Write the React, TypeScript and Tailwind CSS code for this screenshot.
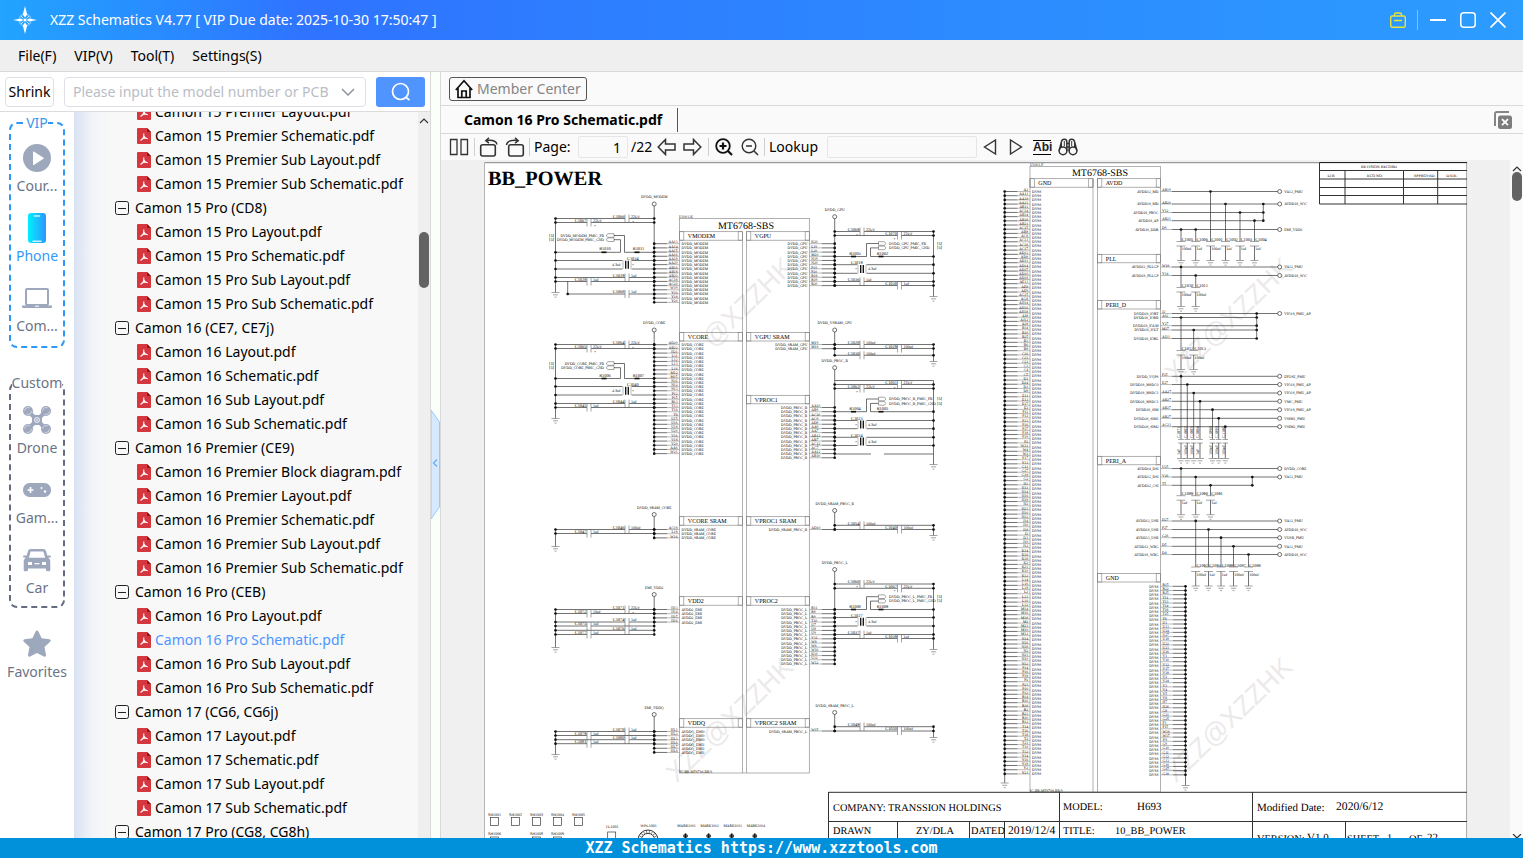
import { Fragment, type ReactNode } from "react";

/* ------------------------------------------------------------------ */
/* Schematic drawing. Sheet coordinates are scaled by K into the       */
/* viewBox, so that small print can use whole-number font sizes.       */
/* ------------------------------------------------------------------ */
const K = 3;
const WIRE = "#2b2b2b";
const PITCH = 4.19;

type LineProps = { x1: number; y1: number; x2: number; y2: number; c?: string; w?: number };
function L({ x1, y1, x2, y2, c = WIRE, w = 2 }: LineProps) {
  return <line x1={x1 * K} y1={y1 * K} x2={x2 * K} y2={y2 * K} stroke={c} strokeWidth={w} />;
}

type TextProps = {
  x: number;
  y: number;
  children: ReactNode;
  size?: number;
  anchor?: "start" | "middle" | "end";
  bold?: boolean;
  c?: string;
  turn?: number;
};
function T({ x, y, children, size = 11, anchor = "start", bold, c = "#000", turn }: TextProps) {
  return (
    <text
      x={x * K}
      y={y * K}
      fontSize={size}
      textAnchor={anchor}
      fontWeight={bold ? 700 : 400}
      fill={c}
      transform={turn ? `rotate(${turn} ${x * K} ${y * K})` : undefined}
    >
      {children}
    </text>
  );
}

function Box({ x, y, w, h, c = "#8a8a8a", s = 2 }: { x: number; y: number; w: number; h: number; c?: string; s?: number }) {
  return <rect x={x * K} y={y * K} width={w * K} height={h * K} fill="none" stroke={c} strokeWidth={s} />;
}

function Dot({ x, y }: { x: number; y: number }) {
  return <circle cx={x * K} cy={y * K} r={4} fill="#111" />;
}

function Ring({ x, y }: { x: number; y: number }) {
  return <circle cx={x * K} cy={y * K} r={6} fill="#fff" stroke={WIRE} strokeWidth={2} />;
}

function Ground({ x, y }: { x: number; y: number }) {
  return (
    <g>
      <L x1={x - 4} y1={y} x2={x + 4} y2={y} c="#777" />
      <L x1={x - 2.5} y1={y + 2.3} x2={x + 2.5} y2={y + 2.3} c="#777" />
      <L x1={x - 1} y1={y + 4.6} x2={x + 1} y2={y + 4.6} c="#777" />
    </g>
  );
}

function Section({ x, y, name }: { x: number; y: number; name: string }) {
  return (
    <g>
      <Box x={x} y={y} w={63} h={8.5} />
      <Box x={x} y={y} w={4.3} h={8.5} />
      <Box x={x + 58.7} y={y} w={4.3} h={8.5} />
      <T x={x + 8.3} y={y + 6.7} size={18}>
        {name}
      </T>
    </g>
  );
}

function Supply({ x, y, end, name }: { x: number; y: number; end: number; name: string }) {
  return (
    <g>
      <T x={x} y={y - 6} anchor="middle">
        {name}
      </T>
      <L x1={x} y1={y} x2={x} y2={end} />
      <Ring x={x} y={y} />
    </g>
  );
}

type Cap = [y: number, cx: number, name: string, value: string];

function CapWire({ x1, x2, cap }: { x1: number; x2: number; cap: Cap }) {
  const [y, cx, name, value] = cap;
  return (
    <g>
      <L x1={x1} y1={y} x2={cx - 2} y2={y} />
      <L x1={cx + 2} y1={y} x2={x2} y2={y} />
      <L x1={cx - 2} y1={y - 4} x2={cx - 2} y2={y + 4} c="#777" />
      <L x1={cx + 2} y1={y - 4} x2={cx + 2} y2={y + 4} c="#777" />
      <T x={cx - 2.7} y={y - 0.7} anchor="end" size={13}>
        {name}
      </T>
      <T x={cx + 4} y={y - 0.7} size={12}>
        {value}
      </T>
      {value === "22UF" && (
        <T x={cx + (cx > 700 ? -6 : 5)} y={y + 4}>
          +
        </T>
      )}
      <Dot x={x1} y={y} />
      <Dot x={x2} y={y} />
    </g>
  );
}

function PairWire({ x1, x2, y, y2, cx, name }: { x1: number; x2: number; y: number; y2: number; cx: number; name: string }) {
  const mid = (y + y2) / 2;
  return (
    <g>
      {[y, y2].map((v) => (
        <g key={v}>
          <L x1={x1} y1={v} x2={cx - 4.5} y2={v} />
          <L x1={cx + 4.5} y1={v} x2={x2} y2={v} />
          <Dot x={x1} y={v} />
          <Dot x={x2} y={v} />
        </g>
      ))}
      <L x1={cx - 4} y1={y} x2={cx - 4} y2={y2} c="#999" />
      <L x1={cx + 4} y1={y} x2={cx + 4} y2={y2} c="#999" />
      <L x1={cx - 1.3} y1={mid - 4} x2={cx - 1.3} y2={mid + 4} c="#111" w={4} />
      <L x1={cx + 1.3} y1={mid - 4} x2={cx + 1.3} y2={mid + 4} c="#111" w={4} />
      <T x={cx + (cx > 700 ? -11 : 0)} y={y - 0.7} size={13}>
        {name}
      </T>
      <T x={cx + (cx > 700 ? 6 : -15)} y={mid + 1.3} size={12}>
        4.3uF
      </T>
      <T x={cx + (cx > 700 ? -7 : 5)} y={mid + 1.3}>
        +
      </T>
    </g>
  );
}

function LeftPorts({ y, net, res, rs }: { y: number; net: string; res: number; rs: [string, string] }) {
  return (
    <g>
      {["FB", "GND"].map((k, i) => {
        const py = y + i * 4.2;
        const bend = i ? 620.5 : 624.5;
        return (
          <g key={k}>
            <T x={549} y={py + 1.3} size={13}>
              [5]
            </T>
            <T x={604} y={py + 1.3} anchor="end">{`${net}_PMIC_${k}`}</T>
            <path
              d={`M${614 * K} ${(py - 1.8) * K}h-18l-6 5.4l6 5.4h18z`}
              fill="#fff"
              stroke="#777"
              strokeWidth={2}
            />
            <L x1={614} y1={py} x2={bend} y2={py} />
            <L x1={bend} y1={py} x2={bend} y2={res} />
          </g>
        );
      })}
      <L x1={555.5} y1={res} x2={620.5} y2={res} />
      <L x1={624.5} y1={res} x2={654} y2={res} />
      <L x1={601.5} y1={res} x2={606.5} y2={res} w={5} c="#111" />
      <L x1={634.5} y1={res} x2={639.5} y2={res} w={5} c="#111" />
      <T x={605} y={res - 2} anchor="middle" size={13}>
        {rs[0]}
      </T>
      <T x={638.5} y={res - 2} anchor="middle" size={13}>
        {rs[1]}
      </T>
      <Dot x={555.5} y={res} />
      <Dot x={654} y={res} />
    </g>
  );
}

function RightPorts({ y, net, res, rs }: { y: number; net: string; res: number; rs: [string, string] }) {
  return (
    <g>
      {["FB", "GND"].map((k, i) => {
        const py = y + i * 4.4;
        const bend = i ? 870.5 : 866.5;
        return (
          <g key={k}>
            <T x={937} y={py + 1.3} size={13}>
              [5]
            </T>
            <T x={889} y={py + 1.3}>{`${net}_PMIC_${k}`}</T>
            <path
              d={`M${878.5 * K} ${(py - 1.8) * K}h18q8 5.4 0 10.8h-18z`}
              fill="#fff"
              stroke="#777"
              strokeWidth={2}
            />
            <L x1={878.5} y1={py} x2={bend} y2={py} />
            <L x1={bend} y1={py} x2={bend} y2={res} />
          </g>
        );
      })}
      <L x1={834.7} y1={res} x2={866.5} y2={res} />
      <L x1={870.5} y1={res} x2={933.5} y2={res} />
      <L x1={851} y1={res} x2={856} y2={res} w={5} c="#111" />
      <L x1={878.5} y1={res} x2={883.5} y2={res} w={5} c="#111" />
      <T x={855} y={res - 2} anchor="middle" size={13}>
        {rs[0]}
      </T>
      <T x={882.5} y={res - 2} anchor="middle" size={13}>
        {rs[1]}
      </T>
      <Dot x={834.7} y={res} />
      <Dot x={933.5} y={res} />
    </g>
  );
}

type PinsProps = {
  side: "left" | "right";
  edge: number;
  rail: number;
  y: number;
  ids: string[];
  name: string | ((i: number) => string);
};
function Pins({ side, edge, rail, y, ids, name }: PinsProps) {
  const out = side === "left" ? -1 : 1;
  return (
    <g>
      {ids.map((id, i) => {
        const py = y + i * PITCH;
        return (
          <Fragment key={i}>
            <L x1={edge} y1={py} x2={edge + out * 12.5} y2={py} c="#999" />
            <L x1={edge + out * 12.5} y1={py} x2={rail} y2={py} />
            <T x={edge + out * 2} y={py - 0.3} anchor={side === "left" ? "end" : "start"}>
              {id}
            </T>
            <T x={edge - out * 2} y={py + 1.5} anchor={side === "left" ? "start" : "end"}>
              {typeof name === "string" ? name : name(i)}
            </T>
            <Dot x={rail} y={py} />
          </Fragment>
        );
      })}
    </g>
  );
}

type Bank = {
  net: string;
  ring: number;
  end: number;
  top: number;
  ground: number;
  caps: Cap[];
  pairs?: [number, number, string][];
  ports?: { y: number; res: number; rs: [string, string] };
  pinY: number;
  ids: string;
  pin: string | ((i: number) => string);
};

const leftBanks: Bank[] = [
  {
    net: "DVDD_MODEM", ring: 204, end: 302, top: 218.5, ground: 292.5,
    caps: [[218.5, 627, "C1066", "22UF"], [222.5, 589, "C1067", "22UF"], [277.5, 627, "C1029", "1uF"], [281.5, 589, "C1028", "1uF"]],
    pairs: [[260.5, 269, "C1034"]],
    ports: { y: 235.5, res: 252.3, rs: ["R1010", "R1011"] },
    pinY: 243.7, pin: "DVDD_MODEM",
    ids: "AA13 AA14 AA15 AA16 AA18 AA20 AB16 AB18 AB20 AC18 AC20 W19 Y16 Y18 Y20",
  },
  {
    net: "DVDD_CORE", ring: 330, end: 453.5, top: 344.5, ground: 418.5,
    caps: [[344.5, 627, "C1064", "22UF"], [348.5, 589, "C1065", "22UF"], [403.5, 627, "C1044", "1uF"], [407.5, 589, "C1045", "1uF"]],
    pairs: [[386.5, 395, "C1040"]],
    ports: { y: 363.5, res: 378.5, rs: ["R1006", "R1007"] },
    pinY: 344.7, pin: "DVDD_CORE",
    ids: "AD20 AB22 H21 L11 L12 L13 L16 M12 M15 N11 N12 N13 P12 P15 R13 T13 T16 T8 U15 U16 U18 U20 V16 V18 V20 AA6 W21",
  },
  {
    net: "DVDD_SRAM_CORE", ring: 514.5, end: 537.5, top: 529.5, ground: 546.5,
    caps: [[529.5, 627, "C1046", "100nF"], [533.5, 589, "C1047", "1uF"]],
    pinY: 529.5, pin: "DVDD_SRAM_CORE", ids: "AC18 L18 W16",
  },
  {
    net: "EMI_VDD2", ring: 594.5, end: 634.5, top: 609.5, ground: 647.5,
    caps: [[609.5, 627, "C1071", "22UF"], [613.5, 589, "C1072", "10uF"], [622, 627, "C1074", "1uF"], [626, 589, "C1075", "1uF"], [630.3, 627, "C1076", "1uF"], [634.5, 589, "C1077", "1uF"]],
    pinY: 609.5, pin: "AVDD2_EMI", ids: "H13 H14 H15 H16",
  },
  {
    net: "EMI_VDDQ", ring: 714.5, end: 752.3, top: 731.5, ground: 754.5,
    caps: [[731.5, 627, "C1078", "1uF"], [735.5, 589, "C1079", "1uF"], [739.7, 627, "C1080", "1uF"], [743.7, 589, "C1081", "1uF"]],
    pinY: 731.5, pin: (i) => (i < 3 ? "AVDDQ_EMI0" : "AVDDQ_EMI1"), ids: "HL1 HL2 HL3 HL6 HL7 HL8",
  },
];

const rightBanks: Bank[] = [
  {
    net: "DVDD_GPU", ring: 216.7, end: 286, top: 231.5, ground: 296.5,
    caps: [[231.5, 862, "C1069", "22UF"], [235.5, 899.5, "C1070", "22UF"], [281.5, 862, "C1036", "1uF"], [285.5, 899.5, "C1038", "1uF"]],
    pairs: [[264.7, 273.3, "C1019"]],
    ports: { y: 243.5, res: 256.5, rs: ["R1003", "R1002"] },
    pinY: 243.7, pin: "DVDD_GPU", ids: "K20 L19 L20 M20 N19 N20 P19 P20 R18 R19 R20",
  },
  {
    net: "DVDD_VSRAM_GPU", ring: 330, end: 355.3, top: 344.5, ground: 361.5,
    caps: [[344.5, 862, "C1028", "100nF"], [348.5, 899.5, "C1029", "100nF"], [355.3, 862, "C1030", "100nF"]],
    pinY: 344.5, pin: "DVDD_SRAM_GPU", ids: "M19 M18",
  },
  {
    net: "DVDD_PROC_B", ring: 367.7, end: 458, top: 380.5, ground: 464.5,
    caps: [[384.5, 899.5, "C1061", "22UF"], [388.5, 862, "C1062", "22UF"]],
    pairs: [[420.5, 428.7, "C1023"], [437.3, 445.5, "C1024"]],
    ports: { y: 399, res: 411.7, rs: ["R1004", "R1005"] },
    pinY: 407.5, pin: "DVDD_PROC_B", ids: "AA10 AB9 AC10 AC9 AD9 AA9 AA7 AB12 AB7 AC12 AC7 AA12 AB10",
  },
  {
    net: "DVDD_SRAM_PROC_B", ring: 510.5, end: 529.5, top: 525.3, ground: 535.5,
    caps: [[525.3, 862, "C1054", "100nF"], [529.5, 899.5, "C1040", "100nF"]],
    pinY: 529.5, pin: "DVDD_SRAM_PROC_B", ids: "AD10",
  },
  {
    net: "DVDD_PROC_L", ring: 569.5, end: 664, top: 584, ground: 649.5,
    caps: [[584, 862, "C1060", "22UF"], [588.3, 899.5, "C1067", "22UF"], [634.5, 862, "C1037", "1uF"], [638.5, 899.5, "C1039", "1uF"]],
    pairs: [[617.5, 626, "C1027"]],
    ports: { y: 596.7, res: 609.5, rs: ["R1008", "R1009"] },
    pinY: 609.5, pin: "DVDD_PROC_L", ids: "R11 R8 R9 T10 U7 U8 U9 V11 W8 W6 W10 K10 U12 W12",
  },
  {
    net: "DVDD_SRAM_PROC_L", ring: 712.5, end: 731, top: 726.7, ground: 737.5,
    caps: [[726.7, 862, "C1049", "100nF"], [731, 899.5, "C1050", "100nF"]],
    pinY: 731, pin: "DVDD_SRAM_PROC_L", ids: "W15",
  },
];

function PowerBank({ b, side }: { b: Bank; side: "left" | "right" }) {
  const rail = side === "left" ? 654.2 : 834.7;
  const far = side === "left" ? 555.5 : 933.5;
  const Ports = side === "left" ? LeftPorts : RightPorts;
  const cx = side === "left" ? 627 : 862;
  return (
    <g>
      <Supply x={rail} y={b.ring} end={b.end} name={b.net} />
      <L x1={far} y1={b.top} x2={far} y2={b.ground} />
      <Ground x={far} y={b.ground} />
      {b.caps.map((c, i) => (
        <CapWire key={i} x1={Math.min(rail, far)} x2={Math.max(rail, far)} cap={c} />
      ))}
      {b.pairs?.map(([y, y2, name]) => (
        <PairWire key={y} x1={Math.min(rail, far)} x2={Math.max(rail, far)} y={y} y2={y2} cx={cx} name={name} />
      ))}
      {b.ports && <Ports y={b.ports.y} net={b.net} res={b.ports.res} rs={b.ports.rs} />}
      <Pins side={side} edge={side === "left" ? 679.5 : 809.3} rail={rail} y={b.pinY} ids={b.ids.split(" ")} name={b.pin} />
    </g>
  );
}

type OutRow = { y: number; name: string; id: string; to?: string; end?: number };
const outRows: OutRow[] = [
  { y: 191.5, name: "AVDD12_MD", id: "AB19", to: "VA12_PMU" },
  { y: 204, name: "AVDD18_MD", id: "AB20", to: "AVDD18_SOC" },
  { y: 212.5, name: "AVDD18_PROC", id: "Y12", end: 1263.3 },
  { y: 220.7, name: "AVDD18_AP", id: "AB21", end: 1263.3 },
  { y: 229.5, name: "AVDD18_DDR", id: "D9", to: "EMI_VDD1" },
  { y: 267, name: "AVDD12_PLLGP", id: "W18", to: "VA12_PMU" },
  { y: 275.5, name: "AVDD18_PLLGP", id: "Y14", to: "AVDD18_SOC" },
  { y: 313.5, name: "DVDD18_IORT", id: "J2", to: "VIO18_PMU_AP" },
  { y: 317.5, name: "DVDD18_IORB", id: "A62", end: 1256.7 },
  { y: 325.7, name: "DVDD18_IOLM", id: "Y27", end: 1256.7 },
  { y: 330, name: "DVDD18_IOLT", id: "M27", end: 1256.7 },
  { y: 338.5, name: "DVDD18_IORL", id: "AJ21", end: 1256.7 },
  { y: 376.3, name: "DVDD_VQPS", id: "F25", to: "EFUSE_PMU" },
  { y: 384.5, name: "DVDD18_MSDC0", id: "E27", to: "VIO18_PMU_AP" },
  { y: 393, name: "DVDD18_MSDC1", id: "AA27", to: "VIO18_PMU_AP" },
  { y: 401.3, name: "DVDD28_MSDC1", id: "AB27", to: "VMC_PMU" },
  { y: 409.7, name: "DVDD18_SIM", id: "AB27", to: "VIO18_PMU_AP" },
  { y: 418.3, name: "DVDD28_SIM1", id: "AB27", to: "VSIM1_PMU" },
  { y: 426.7, name: "DVDD28_SIM2", id: "AC23", to: "VSIM2_PMU" },
  { y: 468.5, name: "AVDD04_DSI", id: "U25", to: "DVDD_CORE" },
  { y: 477, name: "AVDD12_DSI", id: "V26", to: "VA12_PMU" },
  { y: 485.3, name: "AVDD12_CSI", id: "T5", end: 1252.3 },
  { y: 521, name: "AVDD12_USB", id: "H27", to: "VA12_PMU" },
  { y: 529.5, name: "AVDD18_USB", id: "F27", to: "AVDD18_SOC" },
  { y: 537.7, name: "AVDD33_USB", id: "G26", to: "VUSB_PMU" },
  { y: 546.3, name: "AVDD12_WBG", id: "D5", to: "VA12_PMU" },
  { y: 554.5, name: "AVDD18_WBG", id: "D4", to: "AVDD18_SOC" },
];

type Drop = [x: number, from: number, plate: number, name: string, value: string];
const drops: Drop[] = [
  [1181, 229.5, 241.5, "C1005", "100nF"], [1195.7, 229.5, 241.5, "C1006", "1uF"], [1210.5, 191.5, 241.5, "C1001", "100nF"],
  [1225.5, 204, 241.5, "C1002", "1uF"], [1240, 212.5, 241.5, "C1003", "1uF"], [1254.5, 220.7, 241.5, "C1004", "1uF"],
  [1181, 267, 287.5, "C1010", "100nF"], [1195.7, 275.5, 287.5, "C1011", "100nF"],
  [1181, 317.5, 350.5, "C1012", "100nF"], [1193.7, 330, 350.5, "C1013", "100nF"],
  [1181, 468.5, 495.7, "C1089", "1uF"], [1195.7, 477, 495.7, "C1090", "1uF"], [1210.5, 485.3, 495.7, "C1091", "1uF"],
  [1195.7, 521, 567, "C1092", "100nF"], [1208.5, 529.5, 567, "C1093", "1uF"], [1221, 537.7, 567, "C1098", "1uF"],
  [1233.5, 546.3, 567, "C1087", "100nF"], [1248.5, 554.5, 567, "C1088", "100nF"],
];
const tightDrops: [number, number, string, string][] = [
  [1181, 376.3, "C1071", "1uF"], [1187.3, 384.5, "C1082", "100nF"], [1193.7, 393, "C1083", "100nF"], [1200, 401.3, "C1084", "1uF"],
  [1212.5, 409.7, "C1098", "100nF"], [1218.7, 418.3, "C1099", "100nF"], [1225.3, 426.7, "C1100", "100nF"],
];

const gndSeed =
  "A2 AA11 AA18 AA21 AB11 AC14 AB14 AB18 AB21 AC15 AB8 AC8 AC13 AC16 AC17 AD13 AD8 AD11 AD14 AD15 AD16 AD18 AE13 AE8 AE9 AG15 AG8 AH14 AH16 AH18 AJ8 AJ12 A28 B14 B16 B25 B3 B6 B8 C16 C21 C22 C3 C4 C5 D1 D24 D3 D8 E11 E13 E17 E2 F11 F12 F13 F16 F17 F18 F19 F2 W21 W4 W2 Y17 Y13 G11 G17 G18 G2 H1 H11".split(" ");
const gndLeft = Array.from({ length: 140 }, (_, i) => (i < gndSeed.length ? gndSeed[i] : `${"HJKLMNPRTY"[Math.floor((i - 72) / 7)]}${[10, 12, 14, 16, 18, 2, 23][i % 7]}`));
const gndRight =
  "R15 R22 R25 T11 T13 T14 T18 T25 T8 U1 U13 U24 U27 U18 U22 U23 U26 V1 V10 V12 V17 V18 V2 V24 V3 V4 V5 V8 H7 H26 G8 G21 G25 F3 F15 W18 W17 Y9 G9 G10 G11 G12 G13 G16 G17 G18".split(" ");

function Watermark({ x, y, children }: { x: number; y: number; children: string }) {
  return (
    <text
      x={x * K}
      y={y * K}
      transform={`rotate(-44 ${x * K} ${y * K})`}
      textAnchor="end"
      fontSize={80}
      fontFamily="'Liberation Sans', Arial, sans-serif"
      fill="#dedbdb"
      fillOpacity={0.6}
    >
      {children}
    </text>
  );
}

function Schematic() {
  return (
    <svg
      viewBox="1452 486 2952 2028"
      width={984}
      height={676}
      className="block shrink-0 bg-white"
      fontFamily="'Liberation Serif', 'Times New Roman', serif"
      textRendering="geometricPrecision"
      role="img"
      aria-label="BB_POWER schematic sheet"
    >
      <Watermark x={795} y={269}>@XZZHK</Watermark>
      <Watermark x={795} y={669}>XZZ@XZZHK</Watermark>
      <Watermark x={1294} y={269}>XZZ@XZZHK</Watermark>
      <Watermark x={1294} y={669}>XZZ@XZZHK</Watermark>

      <L x1={484} y1={162.5} x2={1467} y2={162.5} c="#9a9a9a" w={4} />
      <L x1={484.5} y1={162} x2={484.5} y2={838} c="#b5b5b5" w={3} />
      <L x1={1466.7} y1={162} x2={1466.7} y2={838} c="#666" w={2} />
      <T x={488} y={185} size={61} bold c="#000">
        BB_POWER
      </T>

      {/* left controller block */}
      <Box x={679.5} y={218.5} w={129.8} h={554.5} />
      <L x1={742.5} y1={232} x2={742.5} y2={773} c="#8a8a8a" />
      <L x1={746.5} y1={232} x2={746.5} y2={773} c="#8a8a8a" />
      <T x={679} y={217.5}>U1001-K</T>
      <T x={746} y={229} size={30} anchor="middle">MT6768-SBS</T>
      <T x={679.5} y={773}>IC-BB-MT6768-BB.9</T>
      {([["VMODEM", 231.7], ["VCORE", 332.5], ["VCORE SRAM", 516.7], ["VDD2", 596.7], ["VDDQ", 718.7]] as const).map(([n, y]) => (
        <Section key={n} x={679.5} y={y} name={n} />
      ))}
      {([["VGPU", 231.7], ["VGPU SRAM", 332.5], ["VPROC1", 395.3], ["VPROC1 SRAM", 516.7], ["VPROC2", 596.7], ["VPROC2 SRAM", 718.7]] as const).map(([n, y]) => (
        <Section key={n} x={746.5} y={y} name={n} />
      ))}
      {leftBanks.map((b) => (
        <PowerBank key={b.net} b={b} side="left" />
      ))}
      {rightBanks.map((b) => (
        <PowerBank key={b.net} b={b} side="right" />
      ))}
      <L x1={567.7} y1={281.5} x2={567.7} y2={294} />
      <CapWire x1={567.7} x2={654.2} cap={[294, 627, "C1068", "1uF"]} />
      <L x1={834.7} y1={380.5} x2={933.5} y2={380.5} />
      <L x1={834.7} y1={454} x2={871} y2={454} />
      <L x1={884} y1={454} x2={933.5} y2={454} />

      {/* right controller block */}
      <Box x={1030} y={166.5} w={130.5} h={625.5} />
      <L x1={1093} y1={178.5} x2={1093} y2={792} c="#8a8a8a" />
      <L x1={1097.5} y1={178.5} x2={1097.5} y2={792} c="#8a8a8a" />
      <T x={1030} y={165.8}>U1001-F</T>
      <T x={1100} y={176.3} size={30} anchor="middle">MT6768-SBS</T>
      <T x={1030} y={792}>IC-BB-MT6768-BB.9</T>
      <Section x={1030} y={178.7} name="GND" />
      {([["AVDD", 178.7], ["PLL", 254.3], ["PERI_D", 300.5], ["PERI_A", 456.3], ["GND", 573.5]] as const).map(([n, y]) => (
        <Section key={n} x={1097.5} y={y} name={n} />
      ))}
      <L x1={1004.7} y1={191.5} x2={1004.7} y2={783} />
      <Ground x={1004.7} y={783} />
      <Pins side="left" edge={1030} rail={1004.7} y={191.5} ids={gndLeft} name="DVSS" />
      <L x1={1185.5} y1={586.3} x2={1185.5} y2={785.5} />
      <Ground x={1185.5} y={785.5} />
      <Pins side="right" edge={1160.5} rail={1185.5} y={586.3} ids={gndRight} name="DVSS" />

      {outRows.map((r) => (
        <g key={r.name + r.y}>
          <T x={1158.5} y={r.y + 1.3} anchor="end">{r.name}</T>
          <L x1={1160.5} y1={r.y} x2={1172} y2={r.y} c="#999" />
          <L x1={1172} y1={r.y} x2={r.end ?? 1279.7} y2={r.y} />
          <T x={1162} y={r.y - 0.3}>{r.id}</T>
          {r.to && <Ring x={1279.7} y={r.y} />}
          {r.to && <T x={1284.3} y={r.y + 1.3}>{r.to}</T>}
          {r.end && <Dot x={r.end} y={r.y} />}
        </g>
      ))}
      <L x1={1263.3} y1={204} x2={1263.3} y2={220.7} />
      <Dot x={1263.3} y={204} />
      <L x1={1256.7} y1={313.5} x2={1256.7} y2={338.5} />
      <Dot x={1256.7} y={313.5} />
      <L x1={1252.3} y1={477} x2={1252.3} y2={485.3} />
      <Dot x={1252.3} y={477} />
      {drops.map(([x, from, p, name, value]) => (
        <g key={`${x}-${p}`}>
          <Dot x={x} y={from} />
          <L x1={x} y1={from} x2={x} y2={p} />
          <L x1={x - 4.5} y1={p} x2={x + 4.5} y2={p} c="#777" />
          <L x1={x - 4.5} y1={p + 4.5} x2={x + 4.5} y2={p + 4.5} c="#777" />
          <L x1={x} y1={p + 4.5} x2={x} y2={p + 19} />
          <T x={x + 0.7} y={p - 0.5} size={13}>{name}</T>
          <T x={x + 0.7} y={p + 8.5} size={12}>{value}</T>
          <Ground x={x} y={p + 19} />
        </g>
      ))}
      {tightDrops.map(([x, from, name, value]) => (
        <g key={x}>
          <Dot x={x} y={from} />
          <L x1={x} y1={from} x2={x} y2={439} />
          <L x1={x - 2.8} y1={439.5} x2={x + 2.8} y2={439.5} c="#777" />
          <L x1={x - 2.8} y1={443} x2={x + 2.8} y2={443} c="#777" />
          <L x1={x} y1={443} x2={x} y2={458.5} />
          <T x={x - 0.7} y={438} turn={-90} size={13}>{name}</T>
          <T x={x - 0.7} y={455} turn={-90} size={12}>{value}</T>
          <Ground x={x} y={458.5} />
        </g>
      ))}

      {/* revision record */}
      {[170.5, 179, 187.5, 195.5, 204].map((y) => (
        <L key={y} x1={1319.5} y1={y} x2={1467} y2={y} c="#333" w={3} />
      ))}
      <L x1={1319.5} y1={162.5} x2={1467} y2={162.5} c="#222" w={3} />
      <L x1={1319.5} y1={162.5} x2={1319.5} y2={204} c="#333" w={3} />
      {[1345, 1403.5, 1437.7].map((x) => (
        <L key={x} x1={x} y1={170.5} x2={x} y2={204} c="#333" w={3} />
      ))}
      <T x={1379} y={168.3} anchor="middle" size={12}>REVISION RECORD</T>
      <T x={1331} y={176.8} anchor="middle" size={12}>LTR</T>
      <T x={1375} y={176.8} anchor="middle" size={12}>ECO NO:</T>
      <T x={1424.5} y={176.8} anchor="middle" size={12}>APPROVED:</T>
      <T x={1452} y={176.8} anchor="middle" size={12}>DATE:</T>

      {/* title block */}
      <L x1={828.5} y1={792.3} x2={1467} y2={792.3} c="#555" w={4} />
      <L x1={828.5} y1={821.5} x2={1467} y2={821.5} c="#333" w={3} />
      {[828.5, 1059.5, 1252.5].map((x) => (
        <L key={x} x1={x} y1={792} x2={x} y2={838} c="#333" w={3} />
      ))}
      {[897.5, 969.5, 1004.5, 1345.5].map((x) => (
        <L key={x} x1={x} y1={821.5} x2={x} y2={838} c="#333" w={3} />
      ))}
      <T x={833} y={811} size={31} c="#000">COMPANY: TRANSSION HOLDINGS</T>
      <T x={1063} y={809.5} size={31} c="#000">MODEL:</T>
      <T x={1137} y={810} size={33} c="#000">H693</T>
      <T x={1257} y={811} size={33} c="#000">Modified Date:</T>
      <T x={1336} y={810} size={35} c="#000">2020/6/12</T>
      <T x={833} y={834} size={31} c="#000">DRAWN</T>
      <T x={916} y={834} size={31} c="#000">ZY/DLA</T>
      <T x={971} y={834} size={31} c="#000">DATED</T>
      <T x={1008} y={834} size={35} c="#000">2019/12/4</T>
      <T x={1063} y={834} size={31} c="#000">TITLE:</T>
      <T x={1115} y={834} size={31} c="#000">10_BB_POWER</T>
      <T x={1257} y={842} size={31} c="#000">VERSION:</T>
      <T x={1307} y={841} size={33} c="#000">V1.0</T>
      <T x={1347} y={842} size={31} c="#000">SHEET</T>
      <T x={1387} y={841} size={31} c="#000">1</T>
      <T x={1409} y={842} size={31} c="#000">OF</T>
      <T x={1427} y={841} size={33} c="#000">22</T>

      {/* test pads and marks */}
      {[0, 1, 2, 3, 4].map((i) => (
        <g key={i}>
          <T x={494.5 + i * 21} y={815.5} anchor="middle" size={12}>{`SH100${i + 1}`}</T>
          <Box x={490.5 + i * 21} y={817.5} w={8} h={8} c="#333" s={2} />
        </g>
      ))}
      {[[0, 6], [2, 8], [3, 9]].map(([i, n]) => (
        <g key={i}>
          <T x={494.5 + i * 21} y={834.8} anchor="middle" size={12}>{`SH100${n}`}</T>
          <Box x={490.5 + i * 21} y={837} w={8} h={8} c="#333" s={2} />
        </g>
      ))}
      <T x={612} y={827.5} anchor="middle" size={12}>TL1001</T>
      <Box x={607.7} y={832} w={8} h={8} c="#333" s={2} />
      <T x={648.5} y={827} anchor="middle" size={12}>WPL1001</T>
      <circle cx={648 * K} cy={840 * K} r={30} fill="none" stroke="#333" strokeWidth={3} />
      <circle cx={648 * K} cy={840 * K} r={20} fill="none" stroke="#333" strokeWidth={3} />
      <circle cx={648 * K} cy={840 * K} r={25} fill="none" stroke="#555" strokeWidth={7} strokeDasharray="2 6" />
      {[1, 2, 3, 4].map((n) => {
        const x = 685.5 + (n - 1) * 23.1;
        return (
          <g key={n}>
            <T x={x + 1} y={827} anchor="middle">{`MARK100${n}`}</T>
            <circle cx={x * K} cy={836 * K} r={6} fill="none" stroke="#333" strokeWidth={2} />
            <L x1={x} y1={833.5} x2={x} y2={838} c="#111" w={4} />
            <L x1={x - 2} y1={836} x2={x + 2} y2={836} c="#111" w={4} />
          </g>
        );
      })}
    </svg>
  );
}

/* ------------------------------------------------------------------ */
/* Icons                                                               */
/* ------------------------------------------------------------------ */
function Svg({ w, h, children, vb }: { w: number; h: number; children: ReactNode; vb?: string }) {
  return (
    <svg width={w} height={h} viewBox={vb ?? `0 0 ${w} ${h}`} fill="none" className="block shrink-0" aria-hidden="true">
      {children}
    </svg>
  );
}

const Logo = () => (
  <Svg w={24} h={28}>
    <circle cx="12" cy="14" r="6" stroke="#fff" strokeOpacity=".35" strokeWidth="1.5" />
    <path d="M12 0l2.2 8.5L12 11.5 9.800 8.500z M12 28l2.200-8.500L12 16.500 9.800 19.500z" fill="#fff" />
    <path d="M0 14l8-1.600L10.500 14 8 15.600z M24 14l-8-1.600L13.500 14 16 15.600z" fill="#fff" />
    <path d="M8 10l2.500 2.500M16 10l-2.500 2.500M8 18l2.500-2.500M16 18l-2.500-2.500" stroke="#fff" strokeOpacity=".7" />
    <circle cx="12" cy="14" r="1.500" fill="#fff" />
  </Svg>
);

const PdfIcon = () => (
  <Svg w={14} h={16}>
    <path d="M1 0h9l4 4v11a1 1 0 0 1-1 1H1a1 1 0 0 1-1-1V1a1 1 0 0 1 1-1z" fill="#d5373f" />
    <path d="M10 0l4 4h-3a1 1 0 0 1-1-1z" fill="#8f1219" />
    <path d="M6.800 5.500v2.500c0 1.600-1.200 3.400-3.300 4.600M7 8.200c.6 1.400 1.700 2.300 3.800 2.500M4.600 11.200c1.500-.9 3.300-1.200 5-1" stroke="#fff" strokeWidth="1.100" />
  </Svg>
);

const CollapseIcon = () => (
  <Svg w={14} h={14}>
    <rect x=".5" y=".5" width="13" height="13" rx="2" stroke="#222" />
    <path d="M3 7.500h8" stroke="#222" />
  </Svg>
);

const CourseIcon = () => (
  <Svg w={28} h={28}>
    <circle cx="14" cy="14" r="14" fill="#9ea8bd" />
    <path d="M10 8v12.500a.5.5 0 0 0 .8.400l9.700-6.200a.5.5 0 0 0 0-.9L10.800 7.600a.5.5 0 0 0-.8.400z" fill="#fff" />
  </Svg>
);
const PhoneIcon = () => (
  <Svg w={18} h={30}>
    <defs>
      <linearGradient id="phone" x1="0" y1="0" x2="1" y2="0">
        <stop stopColor="#00f0fe" />
        <stop offset="1" stopColor="#2c96ff" />
      </linearGradient>
    </defs>
    <rect width="18" height="30" rx="3" fill="url(#phone)" />
    <path d="M6.500 3h5M5 28.300h8" stroke="#c9f4ff" strokeWidth="1.500" strokeLinecap="round" />
  </Svg>
);
const LaptopIcon = () => (
  <Svg w={30} h={20}>
    <rect x="4" y="1" width="22" height="16" rx="1" stroke="#9ea8bd" strokeWidth="2" />
    <path d="M0 17.500h30v1.500a1 1 0 0 1-1 1H1a1 1 0 0 1-1-1z" fill="#9ea8bd" />
    <path d="M13 18.200h4" stroke="#fff" />
  </Svg>
);
const DroneIcon = () => (
  <Svg w={28} h={28}>
    <path d="M5 5l18 18M23 5L5 23" stroke="#9ea8bd" strokeWidth="4" />
    {[5, 23].map((x) =>
      [5, 23].map((y) => (
        <g key={`${x}-${y}`}>
          <circle cx={x} cy={y} r="5" fill="#9ea8bd" />
          <circle cx={x} cy={y} r="3.500" stroke="#e3e6ee" strokeWidth=".7" strokeDasharray="7 4" />
        </g>
      )),
    )}
    <rect x="9" y="9" width="10" height="10" rx="3" fill="#9ea8bd" />
    <circle cx="14" cy="14" r="2.400" stroke="#fff" strokeWidth=".9" />
    <circle cx="14" cy="14" r=".8" fill="#fff" />
  </Svg>
);
const GameIcon = () => (
  <Svg w={28} h={14}>
    <rect width="28" height="14" rx="6.500" fill="#9ea8bd" />
    <path d="M7.500 4v6M4.500 7h6" stroke="#fff" strokeWidth="1.600" />
    <circle cx="18.500" cy="5" r="1" fill="#fff" />
    <circle cx="22" cy="8.500" r="1.200" fill="#fff" />
  </Svg>
);
const CarIcon = () => (
  <Svg w={28} h={24}>
    <path
      fillRule="evenodd"
      d="M7.500 1h13a2.500 2.500 0 0 1 2.400 1.800L24.300 7.500H27a1 1 0 0 1 0 2h-1.800L26.500 11c.6.700.8 1.500.8 2.500V22a1.300 1.300 0 0 1-1.300 1.300h-1.500A1.500 1.500 0 0 1 23 22v-1.500H5V22a1.500 1.500 0 0 1-1.500 1.300H2A1.300 1.300 0 0 1 .7 22v-8.500c0-1 .2-1.800.8-2.500l1.300-1.500H1a1 1 0 0 1 0-2h2.700l1.400-4.700A2.500 2.500 0 0 1 7.500 1zM7.700 3.500L5.800 9.700h16.400l-1.900-6.200zM5 14v3h4v-3zM19 14v3h4v-3zM11.500 15v1.200h5V15z"
      fill="#9ea8bd"
    />
  </Svg>
);
const StarIcon = () => (
  <Svg w={28} h={28}>
    <path
      d="M12.700 1.200a1.450 1.450 0 0 1 2.600 0l3.300 7 7.800 1.100c1.300.2 1.700 1.500.8 2.400l-5.700 5.400 1.500 7.900c.2 1.300-.9 2.200-2.100 1.600L14 22.900l-6.900 3.700C6 27.200 4.800 26.300 5 25l1.500-7.900L.8 11.700C-.1 10.800.3 9.500 1.600 9.300l7.800-1.100z"
      fill="#9ea8bd"
    />
  </Svg>
);

const ink = "#333";

/* ------------------------------------------------------------------ */
/* Left side                                                           */
/* ------------------------------------------------------------------ */
function NavItem({ icon, label, active }: { icon: ReactNode; label: string; active?: boolean }) {
  return (
    <button type="button" className={`flex h-[70px] w-full flex-col items-center ${active ? "text-[#3399fb]" : "text-[#6b7385]"}`}>
      <span className="flex h-10 items-center">{icon}</span>
      <span className="text-sm leading-4 whitespace-nowrap">{label}</span>
    </button>
  );
}

function Sidebar() {
  return (
    <nav className="w-[74px] shrink-0 bg-white px-[9px]" aria-label="Categories">
      <fieldset className="h-[236px] min-w-0 rounded-lg border-2 border-dashed border-[#2e97f7]">
        <legend className="mx-auto h-[22px] text-sm leading-[22px] text-[#3c96ea]">VIP</legend>
        <div className="pt-[4px]">
          <NavItem icon={<CourseIcon />} label="Cour..." />
          <NavItem icon={<PhoneIcon />} label="Phone" active />
          <NavItem icon={<LaptopIcon />} label="Com..." />
        </div>
      </fieldset>
      <fieldset className="mt-6 h-[236px] min-w-0 rounded-lg border-2 border-dashed border-[#646d80]">
        <legend className="mx-auto h-[22px] text-sm leading-[22px] text-[#6b7385]">Custom</legend>
        <div className="pt-[6px]">
          <NavItem icon={<DroneIcon />} label="Drone" />
          <NavItem icon={<GameIcon />} label="Gam..." />
          <NavItem icon={<CarIcon />} label="Car" />
        </div>
      </fieldset>
      <div className="-mx-1 pt-4">
        <NavItem icon={<StarIcon />} label="Favorites" />
      </div>
    </nav>
  );
}

const tree: { folder?: string; files: string[] }[] = [
  { files: ["Camon 15 Premier Layout.pdf", "Camon 15 Premier Schematic.pdf", "Camon 15 Premier Sub Layout.pdf", "Camon 15 Premier Sub Schematic.pdf"] },
  { folder: "Camon 15 Pro (CD8)", files: ["Camon 15 Pro Layout.pdf", "Camon 15 Pro Schematic.pdf", "Camon 15 Pro Sub Layout.pdf", "Camon 15 Pro Sub Schematic.pdf"] },
  { folder: "Camon 16 (CE7, CE7j)", files: ["Camon 16 Layout.pdf", "Camon 16 Schematic.pdf", "Camon 16 Sub Layout.pdf", "Camon 16 Sub Schematic.pdf"] },
  {
    folder: "Camon 16 Premier (CE9)",
    files: ["Camon 16 Premier Block diagram.pdf", "Camon 16 Premier Layout.pdf", "Camon 16 Premier Schematic.pdf", "Camon 16 Premier Sub Layout.pdf", "Camon 16 Premier Sub Schematic.pdf"],
  },
  { folder: "Camon 16 Pro (CEB)", files: ["Camon 16 Pro Layout.pdf", "Camon 16 Pro Schematic.pdf", "Camon 16 Pro Sub Layout.pdf", "Camon 16 Pro Sub Schematic.pdf"] },
  { folder: "Camon 17 (CG6, CG6j)", files: ["Camon 17 Layout.pdf", "Camon 17 Schematic.pdf", "Camon 17 Sub Layout.pdf", "Camon 17 Sub Schematic.pdf"] },
  { folder: "Camon 17 Pro (CG8, CG8h)", files: [] },
];

function FileTree() {
  return (
    <div className="min-w-0 flex-1 overflow-hidden bg-[#f8f8f8] bg-linear-to-r from-[#d9e2f2] via-[#f1f4f8] via-[18px] to-[#f8f8f8] to-[36px]">
      <ul className="-mt-3 pl-[41px] text-sm leading-6 whitespace-nowrap text-black">
        {tree.map((g, i) => (
          <li key={i}>
            {g.folder && (
              <button type="button" className="flex h-6 items-center gap-[6px]">
                <CollapseIcon />
                {g.folder}
              </button>
            )}
            <ul className="pl-[22px]">
              {g.files.map((f) => (
                <li key={f}>
                  <a href="#sheet" className={`flex h-6 items-center gap-[4px] ${f === "Camon 16 Pro Schematic.pdf" ? "text-[#4f94ff]" : ""}`}>
                    <PdfIcon />
                    {f}
                  </a>
                </li>
              ))}
            </ul>
          </li>
        ))}
      </ul>
    </div>
  );
}

function LeftPane() {
  return (
    <section className="flex w-[431px] shrink-0 flex-col border-r border-[#d9d9d9] bg-white">
      <form className="flex h-10 shrink-0 items-center border-b border-[#dcdcdc] pr-[5px] pl-[5px] text-sm">
        <button type="button" className="h-[30px] w-[49px] shrink-0 rounded-[4px] border border-[#dcdfe6] text-center text-black">
          Shrink
        </button>
        <div className="ml-[10px] flex h-[30px] w-[302px] items-center rounded-[4px] border border-[#dcdfe6] pr-[10px] pl-2">
          <input
            aria-label="Model number or PCB"
            placeholder="Please input the model number or PCB"
            className="min-w-0 flex-1 bg-transparent placeholder:text-[#b9bdc6] focus:outline-none"
          />
          <Svg w={14} h={8}>
            <path d="M1 1l6 6 6-6" stroke="#8f949e" strokeWidth="1.500" />
          </Svg>
        </div>
        <button type="button" aria-label="Search" className="ml-[10px] flex h-[30px] w-[49px] items-center justify-center rounded-[3px] bg-[#4f94ff]">
          <Svg w={20} h={20}>
            <circle cx="9.500" cy="9.500" r="8" stroke="#fff" strokeWidth="1.700" />
            <path d="M15 15.500l3.500 2.500" stroke="#fff" strokeWidth="1.700" />
          </Svg>
        </button>
      </form>
      <div className="flex min-h-0 flex-1 overflow-hidden">
        <Sidebar />
        <FileTree />
        <div className="flex w-3 shrink-0 flex-col items-center bg-[#efefef] pt-[6px]">
          <Svg w={10} h={6}>
            <path d="M1 5l4-4 4 4" stroke="#333" strokeWidth="1.200" />
          </Svg>
          <span className="mt-[108px] h-14 w-[10px] rounded-full bg-[#636363]" />
        </div>
      </div>
    </section>
  );
}

/* ------------------------------------------------------------------ */
/* Viewer                                                              */
/* ------------------------------------------------------------------ */
const Sep = ({ className }: { className: string }) => <span className={`h-[18px] w-px shrink-0 bg-[#cfcfcf] ${className}`} />;

function Tool({ label, className = "", children }: { label: string; className?: string; children: ReactNode }) {
  return (
    <button type="button" aria-label={label} className={`shrink-0 ${className}`}>
      {children}
    </button>
  );
}

function Toolbar() {
  return (
    <div className="flex h-[26px] shrink-0 items-center bg-[#fafafa] pl-2 text-sm text-black">
      <Tool label="Two pages">
        <Svg w={20} h={18}>
          <path d="M1.500 1.500h6.500v15H1.500zM12 1.500h6.500v15H12z" stroke={ink} strokeWidth="1.300" />
        </Svg>
      </Tool>
      <Sep className="mr-1 ml-[5px]" />
      <Tool label="Rotate left">
        <Svg w={20} h={20}>
          <rect x="1.700" y="7.700" width="14.600" height="11.300" rx="2" stroke={ink} strokeWidth="1.600" />
          <path d="M18 7.500C17.500 4.500 14 2.800 7.500 3.500M10 .7L6.800 3.600 10 6.200" stroke={ink} strokeWidth="1.500" />
        </Svg>
      </Tool>
      <Tool label="Rotate right" className="ml-[6px]">
        <Svg w={20} h={20}>
          <rect x="3.700" y="7.700" width="14.600" height="11.300" rx="2" stroke={ink} strokeWidth="1.600" />
          <path d="M1.500 8C2 4.500 6 2.800 12.500 3.500M10 .7l3.200 2.900L10 6.200" stroke={ink} strokeWidth="1.500" />
        </Svg>
      </Tool>
      <Sep className="mx-1" />
      <label htmlFor="page" className="w-[38px]">Page:</label>
      <input id="page" defaultValue="1" className="ml-[6px] h-[22px] w-[50px] rounded-[2px] border border-[#e6e6e6] bg-[#fafafa] pr-[6px] text-right" />
      <span className="ml-[3px] w-[22px]">/22</span>
      <Tool label="Previous page" className="ml-1">
        <Svg w={19} h={18}>
          <path d="M1.200 9L8.500 1.500V6H18v6H8.500v4.500z" stroke={ink} strokeWidth="1.500" />
        </Svg>
      </Tool>
      <Tool label="Next page" className="ml-[7px]">
        <Svg w={19} h={18}>
          <path d="M17.800 9l-7.300-7.500V6H1v6h9.500v4.500z" stroke={ink} strokeWidth="1.500" />
        </Svg>
      </Tool>
      <Sep className="mr-[6px] ml-[6px]" />
      <Tool label="Zoom in">
        <Svg w={18} h={18}>
          <circle cx="8" cy="8" r="6.800" stroke="#111" strokeWidth="1.800" />
          <path d="M8 4.500v7M4.500 8h7M13 13l4 4" stroke="#111" strokeWidth="2.200" />
        </Svg>
      </Tool>
      <Tool label="Zoom out" className="ml-2">
        <Svg w={18} h={18}>
          <circle cx="8" cy="8" r="6.800" stroke={ink} strokeWidth="1.400" />
          <path d="M5 8h6M13 13l4 4" stroke={ink} strokeWidth="1.600" />
        </Svg>
      </Tool>
      <Sep className="mr-1 ml-[5px]" />
      <label htmlFor="lookup" className="w-[52px]">Lookup</label>
      <input id="lookup" className="ml-[6px] h-[22px] w-[150px] rounded-[2px] border border-[#e6e6e6] bg-[#fafafa] px-1" />
      <Tool label="Find previous" className="ml-[6px]">
        <Svg w={14} h={18}>
          <path d="M12.500 2v14L1.500 9z" stroke={ink} strokeWidth="1.400" />
        </Svg>
      </Tool>
      <Tool label="Find next" className="ml-3">
        <Svg w={14} h={18}>
          <path d="M1.500 2v14l11-7z" stroke={ink} strokeWidth="1.400" />
        </Svg>
      </Tool>
      <button type="button" className="ml-[10px] w-[18px] border-y border-black text-center font-['Liberation_Sans',Arial,sans-serif] text-xs leading-[13px] font-bold text-[#222]">
        Abi
      </button>
      <Tool label="Search document" className="ml-[7px]">
        <Svg w={20} h={18}>
          <path d="M1.200 12.500L3.500 3.500Q4 1 6.500 1.200 9 1.500 8.800 4v9M18.800 12.500L16.500 3.500Q16 1 13.500 1.200 11 1.500 11.200 4v9M8.800 5.500h2.400M8.800 9h2.400" stroke={ink} strokeWidth="1.500" />
          <circle cx="5" cy="12.800" r="3.900" stroke={ink} strokeWidth="1.500" />
          <circle cx="15" cy="12.800" r="3.900" stroke={ink} strokeWidth="1.500" />
          <path d="M3.500 5v4M16.500 5v4M6.300 3v5M13.700 3v5" stroke={ink} />
        </Svg>
      </Tool>
    </div>
  );
}

function Viewer() {
  return (
    <main className="flex min-w-0 flex-1 flex-col border-l border-[#d9d9d9] bg-[#fafafa]">
      <div className="flex h-[34px] shrink-0 items-center border-b border-[#d9d9d9] pl-2">
        <button type="button" className="flex h-6 items-center gap-1 rounded-[3px] border border-[#555] px-[5px] text-sm text-[#858585]">
          <Svg w={18} h={20}>
            <path d="M.8 11L9 1.800 17.200 11M3 9v9.500h12V9M6.800 18v-6h4.400v6" stroke="#111" strokeWidth="1.700" />
          </Svg>
          Member Center
        </button>
      </div>
      <div className="flex h-7 shrink-0 items-center border-b border-[#d9d9d9] pr-[11px]">
        <button type="button" className="h-6 border-r border-[#555] pr-[15px] pl-[23px] text-sm leading-6 font-bold whitespace-nowrap text-black">
          Camon 16 Pro Schematic.pdf
        </button>
        <button type="button" aria-label="Close all" className="ml-auto">
          <Svg w={18} h={18}>
            <path d="M1 15V3a2 2 0 0 1 2-2h12" stroke="#858585" strokeWidth="2" />
            <rect x="4" y="4.500" width="14" height="13.500" rx="2.500" fill="#7d7d7d" />
            <path d="M8 8.200l6 6M14 8.200l-6 6" stroke="#fff" strokeWidth="1.800" />
          </Svg>
        </button>
      </div>
      <Toolbar />
      <div className="flex min-h-0 flex-1 bg-[#f0f0f0]">
        <div id="sheet" className="flex min-w-0 flex-1 justify-center overflow-hidden pt-[2px]">
          <Schematic />
        </div>
        <div className="flex w-[13px] shrink-0 flex-col items-center bg-[#fafafa] pt-[6px]">
          <Svg w={10} h={6}>
            <path d="M1 5l4-4 4 4" stroke="#333" strokeWidth="1.200" />
          </Svg>
          <span className="h-[29px] w-[10px] rounded-full bg-[#636363]" />
          <span className="mt-auto">
            <Svg w={10} h={4}>
              <path d="M1 0l4 4 4-4" stroke="#333" strokeWidth="1.200" />
            </Svg>
          </span>
        </div>
      </div>
    </main>
  );
}

export default function App() {
  return (
    <div className="flex h-screen flex-col overflow-hidden font-['Noto_Sans','Open_Sans',sans-serif]">
      <header className="flex h-10 shrink-0 items-center bg-linear-to-r from-[#22a4ff] via-[#2f73ff] via-20% to-[#2c9cff] pr-[17px] pl-[13px] text-white">
        <Logo />
        <h1 className="ml-[13px] text-sm whitespace-nowrap">XZZ Schematics V4.77 [ VIP Due date: 2025-10-30 17:50:47 ]</h1>
        <div className="ml-auto flex items-center">
          <button type="button" aria-label="License">
            <Svg w={16} h={16}>
              <rect x=".7" y="4" width="14.600" height="11.300" rx="1.500" stroke="#e8e337" strokeWidth="1.400" />
              <path d="M4.500 4V2.500A1.500 1.500 0 0 1 6 1h4a1.500 1.500 0 0 1 1.500 1.500V4M4 8.500h8" stroke="#e8e337" strokeWidth="1.400" />
            </Svg>
          </button>
          <span className="mr-3 ml-[11px] h-5 w-px bg-white/40" />
          <button type="button" aria-label="Minimize">
            <Svg w={16} h={16}>
              <path d="M0 8h16" stroke="#fff" strokeWidth="2" />
            </Svg>
          </button>
          <button type="button" aria-label="Maximize" className="ml-[14px]">
            <Svg w={16} h={16}>
              <rect x=".8" y=".8" width="14.400" height="14.400" rx="3" stroke="#fff" strokeWidth="1.500" />
            </Svg>
          </button>
          <button type="button" aria-label="Close" className="ml-[14px]">
            <Svg w={16} h={16}>
              <path d="M.5.5l15 15M15.500.5l-15 15" stroke="#fff" strokeWidth="1.700" />
            </Svg>
          </button>
        </div>
      </header>
      <div className="flex h-8 shrink-0 items-center gap-[18px] border-b border-[#d9d9d9] bg-[#efefef] pt-px pl-[18px] text-sm text-black">
        <button type="button">File(F)</button>
        <button type="button">VIP(V)</button>
        <button type="button">Tool(T)</button>
        <button type="button">Settings(S)</button>
      </div>
      <div className="flex min-h-0 flex-1">
        <LeftPane />
        <div className="flex w-[9px] shrink-0 items-start bg-[#fafffa] pt-[338px]">
          <button type="button" aria-label="Collapse panel">
            <Svg w={9} h={109}>
              <path d="M0 0l8.500 12v85L0 109z" fill="#d6e9ff" stroke="#94cbfb" />
              <path d="M6 49.500L2.500 53 6 56.500" stroke="#5fb0f5" strokeWidth="1.200" />
            </Svg>
          </button>
        </div>
        <Viewer />
      </div>
      <footer className="h-5 shrink-0 bg-[#0091da] text-center font-['DejaVu_Sans_Mono',monospace] text-[15px] leading-5 font-bold text-white">
        XZZ Schematics https://www.xzztools.com
      </footer>
    </div>
  );
}
